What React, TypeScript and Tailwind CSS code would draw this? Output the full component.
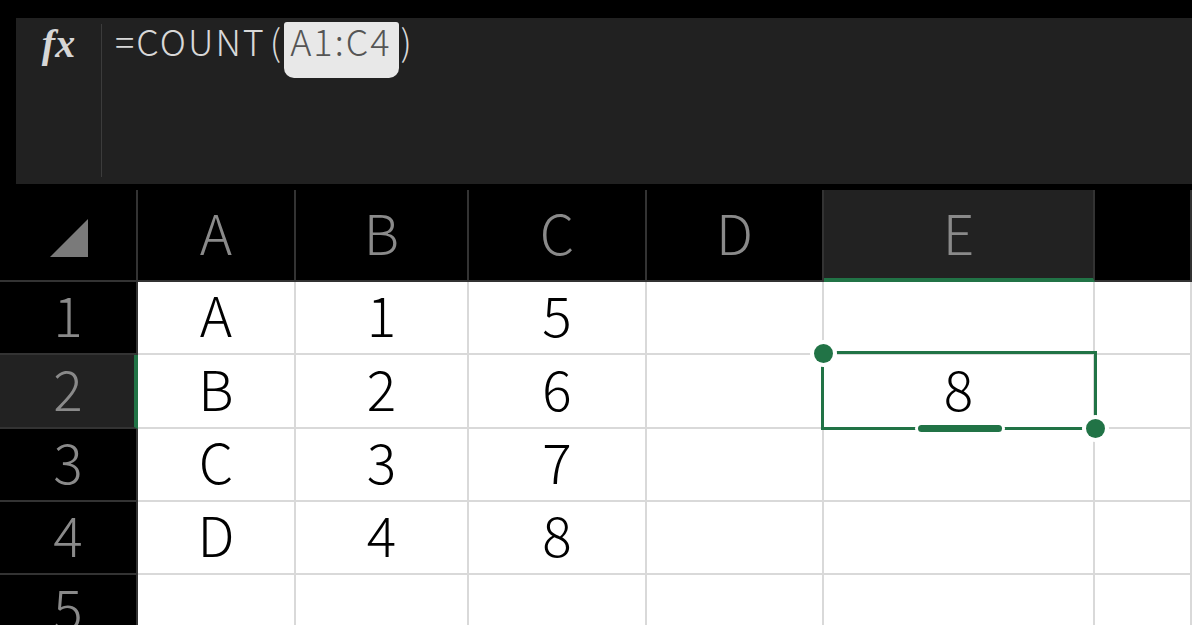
const green = "#217346";

const columns = ["A", "B", "C", "D", "E", "F"];

const cells: string[][] = [
  ["A", "1", "5", "", "", ""],
  ["B", "2", "6", "", "8", ""],
  ["C", "3", "7", "", "", ""],
  ["D", "4", "8", "", "", ""],
  ["", "", "", "", "", ""],
];

const font = { fontFamily: '"Noto Sans CJK JP", "Noto Sans", sans-serif' };

function FormulaBar() {
  return (
    <div className="ml-[16px] mt-[18px] flex h-[166px] bg-[#212121]">
      <div className="flex w-[85px] justify-center pt-[6px]">
        <span
          className="text-[40px] font-bold italic leading-none text-[#d6d6d6]"
          style={{ fontFamily: '"Liberation Serif", serif' }}
        >
          fx
        </span>
      </div>
      <div className="mt-[6px] h-[153px] w-px bg-[#3c3c3c]" />
      <div
        className="flex items-start pl-[13px] pt-[4px] text-[36px] font-light leading-none tracking-[2px] text-[#d8d8d8]"
        style={font}
      >
        <span>=COUNT</span>
        <span className="ml-[4px]">(</span>
        <span className="ml-[1px] inline-block rounded-b-[10px] rounded-t-[3px] bg-[#e8e8e8] pb-[20px] pl-[6px] pr-[8px] text-[#555]">
          A1:C4
        </span>
        <span className="ml-[1px]">)</span>
      </div>
    </div>
  );
}

function Grid() {
  return (
    <div
      className="relative mt-[6px] grid grid-cols-[138px_158px_173px_178px_177px_271px_1fr] grid-rows-[92px_73px_74px_73px_73px_73px] font-light"
      style={font}
    >
      {/* corner */}
      <div className="border-b-2 border-r-2 border-[#333] bg-black pl-[50px] pt-[29px]">
        <svg width="38" height="38" viewBox="0 0 38 38">
          <polygon points="38,0 38,38 0,38" fill="#7a7a7a" />
        </svg>
      </div>

      {/* column headers */}
      {columns.map((c) =>
        c === "E" ? (
          <div
            key={c}
            className="flex items-center justify-center border-b-[4px] border-r-2 border-[#333] border-b-[#217346] bg-[#222] pb-[6px] text-[55px] leading-none text-[#8a8a8a]"
          >
            {c}
          </div>
        ) : (
          <div
            key={c}
            className="flex items-center justify-center border-b-2 border-r-2 border-[#333] bg-black pb-[8px] text-[55px] leading-none text-[#8a8a8a]"
          >
            {c === "F" ? "" : c}
          </div>
        )
      )}

      {cells.map((row, i) => (
        <div key={i} className="contents">
          <div
            className={`flex items-center justify-center border-b-2 border-[#333] pb-[8px] text-[55px] leading-none text-[#8a8a8a] ${
              i === 1 ? "border-r-4 border-r-[#217346] bg-[#222] pl-[2px]" : "border-r-2 bg-black"
            }`}
          >
            {i + 1}
          </div>
          {row.map((v, j) => (
            <div
              key={j}
              className="flex items-center justify-center border-b-2 border-r-2 border-[#d9d9d9] bg-white pb-[8px] text-[55px] leading-none text-black"
            >
              {v}
            </div>
          ))}
        </div>
      ))}

      {/* selection on E2 */}
      <div className="absolute left-[821px] top-[161px] h-[79px] w-[276px] border-[3px]" style={{ borderColor: green }} />
      <div className="absolute left-[918px] top-[235px] h-[7px] w-[84px] rounded-full ring-[3px] ring-white" style={{ background: green }} />
      <div className="absolute left-[814px] top-[154px] h-[19px] w-[19px] rounded-full ring-4 ring-white" style={{ background: green }} />
      <div className="absolute left-[1086px] top-[229px] h-[19px] w-[19px] rounded-full ring-4 ring-white" style={{ background: green }} />
    </div>
  );
}

export default function App() {
  return (
    <div className="h-[625px] w-[1192px] overflow-hidden bg-black">
      <FormulaBar />
      <Grid />
    </div>
  );
}
